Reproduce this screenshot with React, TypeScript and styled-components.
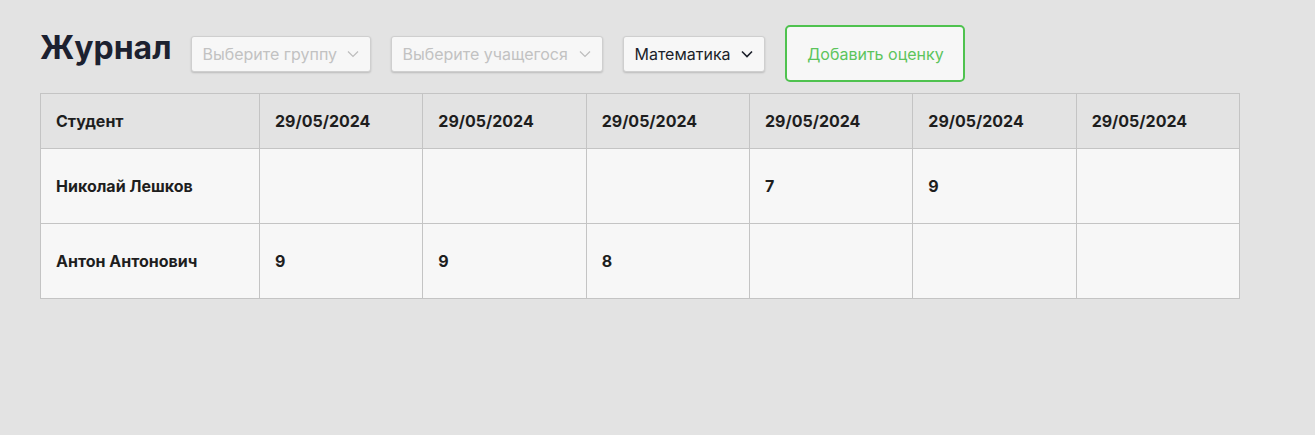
import React from "react";
import styled, { createGlobalStyle } from "styled-components";

const GlobalStyle = createGlobalStyle`
  html, body { margin: 0; padding: 0; }
  body {
    background: #e3e3e3;
    font-family: Inter, "Noto Sans", "Liberation Sans", sans-serif;
    color: #1e1e1e;
  }
`;

const Page = styled.div`
  padding: 25px 40px;
  display: flex;
  flex-direction: column;
  gap: 11px;
`;

const Toolbar = styled.div`
  display: flex;
  align-items: center;
  gap: 20px;
`;

const Title = styled.h1`
  margin: 0 0 12px 0;
  font-size: 32px;
  line-height: 38px;
  font-weight: 700;
  color: #1c2130;
`;

const SelectBox = styled.div<{ $placeholder?: boolean; $width: number }>`
  display: flex;
  align-items: center;
  justify-content: space-between;
  gap: 10px;
  width: ${(p) => p.$width}px;
  height: 36px;
  box-sizing: border-box;
  padding: 0 11px 0 10px;
  background: #f7f7f7;
  border: 1px solid #cfcfcf;
  border-radius: 3px;
  box-shadow: 0 1px 2px rgba(0, 0, 0, 0.18);
  font-size: 16px;
  white-space: nowrap;
  color: ${(p) => (p.$placeholder ? "#c2c2c2" : "#1b1f2a")};
`;

const Chevron = styled.svg`
  width: 12px;
  height: 8px;
  flex: none;
`;

const AddButton = styled.button`
  width: 180px;
  height: 57px;
  box-sizing: border-box;
  border: 2px solid #4fc24f;
  border-radius: 5px;
  background: #f7f7f7;
  color: #5cc45c;
  font-family: inherit;
  font-size: 16px;
  padding: 0;
  white-space: nowrap;
`;

const Table = styled.table`
  border-collapse: collapse;
  width: 1200px;
  table-layout: fixed;
  font-size: 16px;
`;

const HeadCell = styled.th<{ $w?: number }>`
  text-align: left;
  font-weight: 700;
  background: #e3e3e3;
  border: 1px solid #c4c4c4;
  height: 55px;
  box-sizing: border-box;
  padding: 0 15px;
  color: #1e1e1e;
  width: ${(p) => (p.$w ? `${p.$w}px` : "auto")};
`;

const Cell = styled.td`
  background: #f7f7f7;
  border: 1px solid #c4c4c4;
  height: 75px;
  box-sizing: border-box;
  padding: 0 15px;
  font-weight: 700;
  color: #1e1e1e;
`;

const Select = ({
  label,
  placeholder,
  width,
}: {
  label: string;
  placeholder?: boolean;
  width: number;
}) => (
  <SelectBox $placeholder={placeholder} $width={width}>
    <span>{label}</span>
    <Chevron viewBox="0 0 12 8">
      <path
        d="M1 1.5 L6 6.5 L11 1.5"
        fill="none"
        stroke={placeholder ? "#bdbdbd" : "#1b1f2a"}
        strokeWidth={placeholder ? 1.2 : 1.6}
      />
    </Chevron>
  </SelectBox>
);

const dates = Array.from({ length: 6 }, () => "29/05/2024");
const rows = [
  { name: "Николай Лешков", marks: ["", "", "", "7", "9", ""] },
  { name: "Антон Антонович", marks: ["9", "9", "8", "", "", ""] },
];

export default function App() {
  return (
    <>
      <GlobalStyle />
      <Page>
        <Toolbar>
          <Title>Журнал</Title>
          <Select label="Выберите группу" placeholder width={180} />
          <Select label="Выберите учащегося" placeholder width={212} />
          <Select label="Математика" width={142} />
          <AddButton>Добавить оценку</AddButton>
        </Toolbar>
        <Table>
          <thead>
            <tr>
              <HeadCell $w={219}>Студент</HeadCell>
              {dates.map((d, i) => (
                <HeadCell key={i}>{d}</HeadCell>
              ))}
            </tr>
          </thead>
          <tbody>
            {rows.map((r) => (
              <tr key={r.name}>
                <Cell>{r.name}</Cell>
                {r.marks.map((m, i) => (
                  <Cell key={i}>{m}</Cell>
                ))}
              </tr>
            ))}
          </tbody>
        </Table>
      </Page>
    </>
  );
}
